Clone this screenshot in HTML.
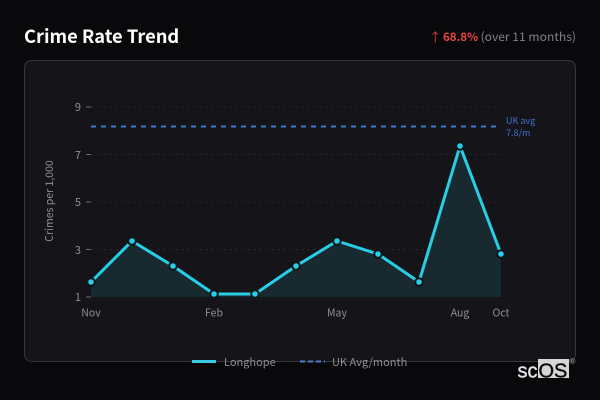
<!DOCTYPE html>
<html><head><meta charset="utf-8">
<style>
html,body{margin:0;padding:0;background:#09090c}
body{width:600px;height:400px;overflow:hidden;position:relative;font-family:"Noto Sans CJK SC","Liberation Sans",sans-serif}
svg{position:absolute;left:0;top:0}
text{font-family:"Noto Sans CJK SC","Liberation Sans",sans-serif}
text.l{font-family:"Liberation Sans",sans-serif}
</style></head><body>
<svg width="600" height="400" viewBox="0 0 600 400" xmlns="http://www.w3.org/2000/svg">
<rect x="24.5" y="60.5" width="551" height="301" rx="7" fill="#151519" stroke="#36363b"/>
<text x="24" y="43" font-size="18.300" font-weight="700" fill="#fff">Crime Rate Trend</text>
<text x="441.500" y="41.500" font-size="12.500" text-anchor="end" fill="#e03c3c">↑</text>
<text x="443" y="41" font-size="11.500" font-weight="700" fill="#ee4444">68.8%</text>
<text x="576" y="41" font-size="12.100" text-anchor="end" fill="#808085">(over 11 months)</text>

<g stroke="#232328" stroke-width="1" stroke-dasharray="3 3">
<line x1="91" x2="501" y1="107" y2="107"/>
<line x1="91" x2="501" y1="154.500" y2="154.500"/>
<line x1="91" x2="501" y1="202" y2="202"/>
<line x1="91" x2="501" y1="249.500" y2="249.500"/>
</g>
<g stroke="#6c6c71" stroke-width="1">
<line x1="86" x2="91" y1="107" y2="107"/>
<line x1="86" x2="91" y1="154.500" y2="154.500"/>
<line x1="86" x2="91" y1="202" y2="202"/>
<line x1="86" x2="91" y1="249.500" y2="249.500"/>
<line x1="86" x2="91" y1="297" y2="297"/>
</g>
<g font-size="11" fill="#8e8e93" text-anchor="end">
<text x="81" y="111">9</text>
<text x="81" y="159">7</text>
<text x="81" y="206">5</text>
<text x="81" y="254">3</text>
<text x="81" y="301">1</text>
</g>
<text transform="translate(53,201) rotate(-90)" font-size="10.500" fill="#8e8e93" text-anchor="middle">Crimes per 1,000</text>
<g font-size="10.500" fill="#8e8e93" text-anchor="middle">
<text x="91" y="316.500">Nov</text>
<text x="214" y="316.500">Feb</text>
<text x="337" y="316.500">May</text>
<text x="460" y="316.500">Aug</text>
<text x="501" y="316.500">Oct</text>
</g>

<path d="M91 282L132 241L173 266L214 294L255 294L296 266L337 241L378 254L419 282L460 146L501 254L501 297L91 297Z" fill="#18292f"/>
<line x1="91" x2="497" y1="126.500" y2="126.500" stroke="#3f79cf" stroke-width="2" stroke-dasharray="5 5"/>
<text x="506" y="124" font-size="9" fill="#3f6fd0">UK avg</text>
<text x="506" y="136" font-size="9" fill="#3f6fd0">7.8/m</text>
<polyline points="91,282 132,241 173,266 214,294 255,294 296,266 337,241 378,254 419,282 460,146 501,254" fill="none" stroke="#27cfe6" stroke-width="3" stroke-linejoin="round"/>
<g fill="#27cfe6" stroke="#0c141b" stroke-width="2">
<circle cx="91" cy="282" r="3.800"/><circle cx="132" cy="241" r="3.800"/><circle cx="173" cy="266" r="3.800"/><circle cx="214" cy="294" r="3.800"/><circle cx="255" cy="294" r="3.800"/><circle cx="296" cy="266" r="3.800"/><circle cx="337" cy="241" r="3.800"/><circle cx="378" cy="254" r="3.800"/><circle cx="419" cy="282" r="3.800"/><circle cx="460" cy="146" r="3.800"/><circle cx="501" cy="254" r="3.800"/>
</g>

<line x1="192" x2="216" y1="361.500" y2="361.500" stroke="#3ccde6" stroke-width="3"/>
<text x="224" y="366" font-size="11" fill="#8e8e93">Longhope</text>
<line x1="300" x2="325" y1="361.500" y2="361.500" stroke="#4a7fd0" stroke-width="2" stroke-dasharray="5 3"/>
<text x="332" y="366" font-size="11" fill="#8e8e93">UK Avg/month</text>

<rect x="538" y="359" width="31" height="19" fill="#d6d6d6"/>
<text class="l" x="517.500" y="377.500" font-size="20" fill="#e4e4e4" stroke="#e4e4e4" stroke-width=".4">sc</text>
<text class="l" x="538.500" y="377.500" font-size="20" fill="#0a0a0d" stroke="#0a0a0d" stroke-width=".4">OS</text>
<text class="l" x="569.500" y="364" font-size="8" fill="#aaa">®</text>
</svg>
</body></html>
